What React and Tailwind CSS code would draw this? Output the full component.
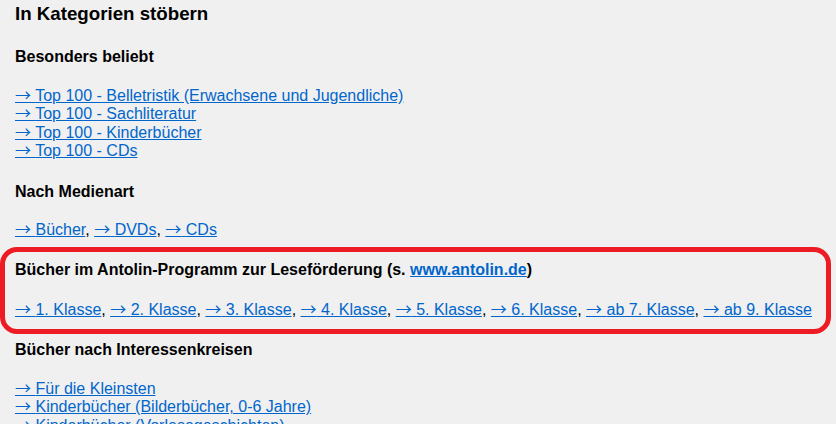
import React from "react";

const Arrow = () => (
  <span
    className="leading-[10px] text-[16px]"
    style={{ fontFamily: '"Noto Sans CJK JP", "DejaVu Sans", sans-serif' }}
  >
    →
  </span>
);

const L = ({ children }) => (
  <a href="#" className="text-[#0066cc] underline whitespace-nowrap">
    <Arrow /> {children}
  </a>
);

function Inline({ items }) {
  return (
    <div className="whitespace-nowrap">
      {items.map((t, i) => (
        <React.Fragment key={t}>
          <L>{t}</L>
          {i < items.length - 1 ? ", " : ""}
        </React.Fragment>
      ))}
    </div>
  );
}

function List({ items }) {
  return (
    <div>
      {items.map((t) => (
        <div key={t}>
          <L>{t}</L>
        </div>
      ))}
    </div>
  );
}

const H = ({ children, className = "" }) => (
  <div className={"font-bold text-[16px] " + className}>{children}</div>
);

export default function App() {
  return (
    <div
      className="h-[424px] w-[836px] overflow-hidden bg-[#f0f0f0] text-black text-[16px] leading-[18.4px] pt-[3px] px-[15px]"
      style={{ fontFamily: '"Liberation Sans", Arial, sans-serif' }}
    >
      <div className="font-bold text-[18.72px] leading-[21.5px]">In Kategorien stöbern</div>

      <H className="mt-[23.5px]">Besonders beliebt</H>
      <div className="mt-[20.6px]">
        <List
          items={[
            "Top 100 - Belletristik (Erwachsene und Jugendliche)",
            "Top 100 - Sachliteratur",
            "Top 100 - Kinderbücher",
            "Top 100 - CDs",
          ]}
        />
      </div>

      <H className="mt-[22.4px]">Nach Medienart</H>
      <div className="mt-[19.3px]">
        <Inline items={["Bücher", "DVDs", "CDs"]} />
      </div>

      <div className="-ml-[15px] mt-[7.5px] w-[831px] border-[5px] border-[#ed1c24] rounded-[17px] pl-[10px] pt-[9px] pb-[10px]">
        <H>
          Bücher im Antolin-Programm zur Leseförderung (s.{" "}
          <a href="#" className="text-[#0066cc] underline">
            www.antolin.de
          </a>
          )
        </H>
        <div className="mt-[21.6px]">
          <Inline
            items={[
              "1. Klasse",
              "2. Klasse",
              "3. Klasse",
              "4. Klasse",
              "5. Klasse",
              "6. Klasse",
              "ab 7. Klasse",
              "ab 9. Klasse",
            ]}
          />
        </div>
      </div>

      <H className="mt-[7px]">Bücher nach Interessenkreisen</H>
      <div className="mt-[20.6px]">
        <List
          items={[
            "Für die Kleinsten",
            "Kinderbücher (Bilderbücher, 0-6 Jahre)",
            "Kinderbücher (Vorlesegeschichten)",
            "Kinderbücher (Erstlesebücher)",
            "Jugendbücher",
          ]}
        />
      </div>
    </div>
  );
}
